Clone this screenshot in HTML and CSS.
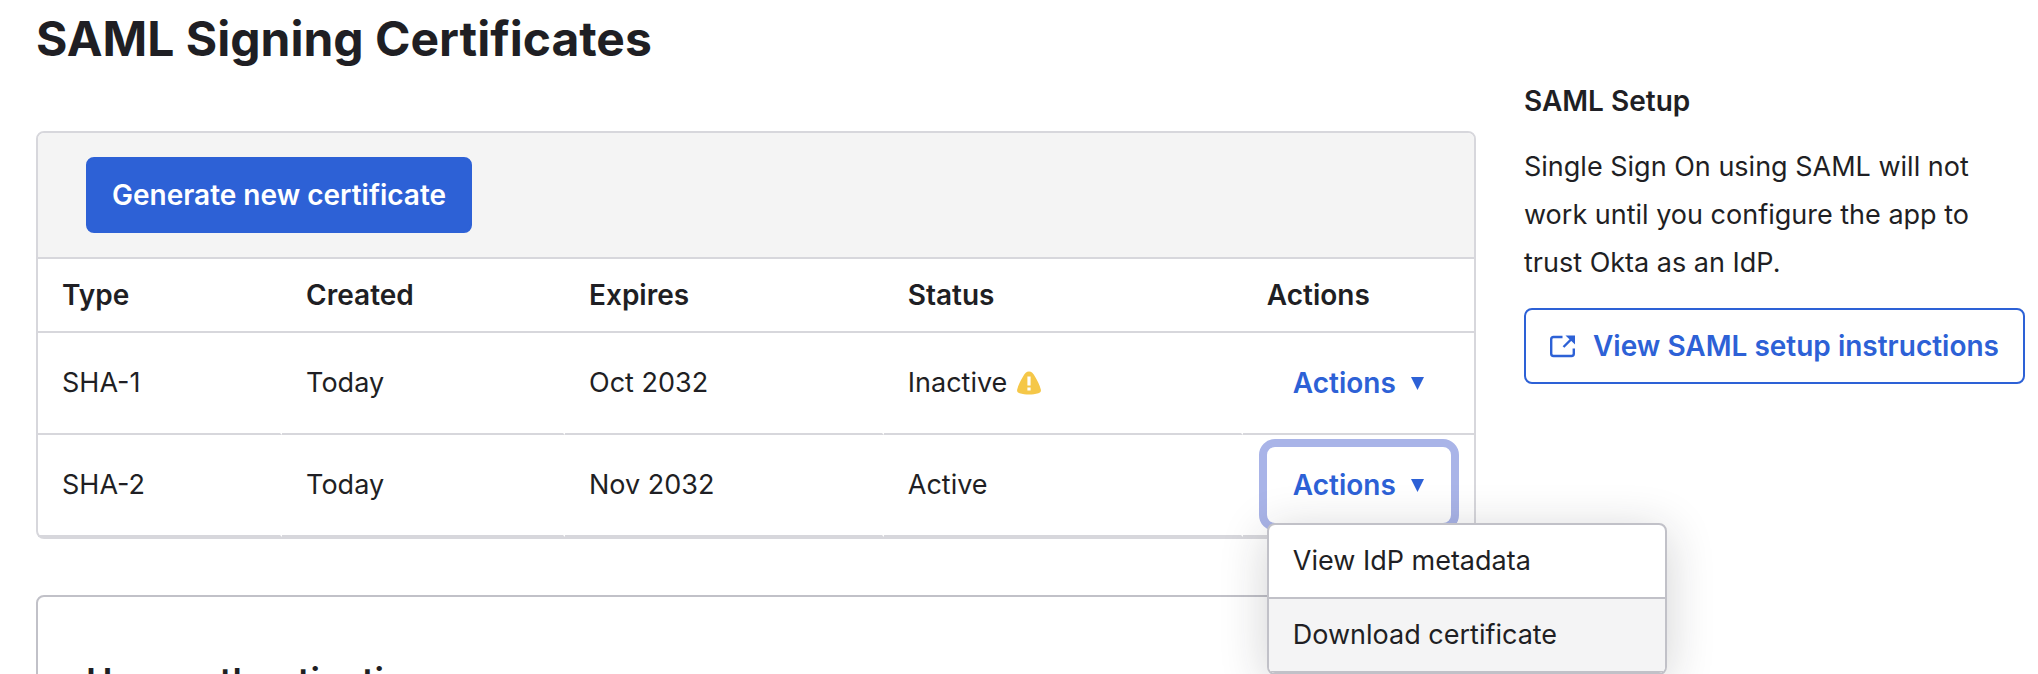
FILE: index.html
```html
<!DOCTYPE html>
<html lang="en">
<head>
<meta charset="utf-8">
<title>SAML Signing Certificates</title>
<link rel="stylesheet" href="styles.css">
</head>
<body>
<div class="page">
  <main class="main">
    <h1 class="title">SAML Signing Certificates</h1>
    <section class="card">
      <div class="toolbar">
        <button class="btn btn-primary" type="button">Generate new certificate</button>
      </div>
      <table class="certs">
        <colgroup>
          <col class="col-type"><col class="col-created"><col class="col-expires"><col class="col-status"><col>
        </colgroup>
        <thead>
          <tr><th scope="col">Type</th><th scope="col">Created</th><th scope="col">Expires</th><th scope="col">Status</th><th scope="col">Actions</th></tr>
        </thead>
        <tbody>
          <tr>
            <td>SHA-1</td><td>Today</td><td>Oct 2032</td>
            <td>
              <span class="status">Inactive
                <svg class="warn" viewBox="0 0 24 24" role="img" aria-label="Warning">
                  <path fill="#f5c748" d="M12 0.5C9.4 0.5 7.8 2.6 6.2 5.2C3.6 9.4 1.4 13.6 0.2 18.6C-0.3 20.6 0.7 21.8 2.6 22.3C8.4 23.9 15.6 23.9 21.4 22.3C23.3 21.8 24.3 20.6 23.8 18.6C22.6 13.6 20.4 9.4 17.8 5.2C16.2 2.6 14.6 0.5 12 0.5Z"/>
                  <path fill="#fff" d="M10.4 5.5h3.2v9h-3.2zM10.4 16.5h3.2v3h-3.2z"/>
                </svg>
              </span>
            </td>
            <td class="cell-actions">
              <button class="btn btn-menu" type="button">Actions
                <svg class="caret" viewBox="0 0 13 13" aria-hidden="true"><path fill="currentColor" d="M0 0h13L6.5 13z"/></svg>
              </button>
            </td>
          </tr>
          <tr>
            <td>SHA-2</td><td>Today</td><td>Nov 2032</td><td>Active</td>
            <td class="cell-actions">
              <div class="dropdown">
                <button class="btn btn-menu is-open" type="button" aria-expanded="true">Actions
                  <svg class="caret" viewBox="0 0 13 13" aria-hidden="true"><path fill="currentColor" d="M0 0h13L6.5 13z"/></svg>
                </button>
                <ul class="menu">
                  <li><a class="menu-item" href="#metadata">View IdP metadata</a></li>
                  <li><a class="menu-item is-hover" href="#download">Download certificate</a></li>
                </ul>
              </div>
            </td>
          </tr>
        </tbody>
      </table>
    </section>
    <section class="panel">
      <h2 class="panel-title">User authentication</h2>
    </section>
  </main>
  <aside class="side">
    <h2 class="side-title">SAML Setup</h2>
    <p class="side-text">Single Sign On using SAML will not work until you configure the app to trust Okta as an IdP.</p>
    <a class="btn btn-outline" href="#setup">
      <svg class="external" viewBox="0 0 25 23" aria-hidden="true">
        <path fill="none" stroke="currentColor" stroke-width="2.4" d="M12.5 2H3.5Q1.2 2 1.2 4.2V18.8Q1.2 21 3.5 21H21.5Q23.8 21 23.8 18.8V13.5"/>
        <path fill="none" stroke="currentColor" stroke-width="2.4" d="M13.5 12L21 4.5"/>
        <path fill="currentColor" d="M15.5 0.5H25V9.5z"/>
      </svg>
      View SAML setup instructions
    </a>
  </aside>
</div>
</body>
</html>
```
FILE: styles.css
```css
* {
  box-sizing: border-box;
}

html {
  overflow: hidden;
}

body {
  margin: 0;
  height: 100vh;
  overflow: hidden;
  background: #fff;
  color: #1f1f24;
  font-family: Inter, sans-serif;
  font-size: 27px;
  line-height: 48px;
}

.page {
  display: flex;
  gap: 48px;
  padding: 0 13px 0 36px;
}

.main {
  flex: 1;
  min-width: 0;
}

.title {
  margin: 0 0 56px;
  padding-top: 3px;
  font-size: 48px;
  font-weight: 700;
  line-height: 72px;
}

.card {
  border: 2px solid #d7d7dc;
  border-radius: 8px;
}

.toolbar {
  display: flex;
  padding: 24px 48px;
  border-bottom: 2px solid #d7d7dc;
  border-radius: 6px 6px 0 0;
  background: #f4f4f4;
}

.btn {
  display: inline-flex;
  align-items: center;
  height: 76px;
  padding: 0 24px;
  border: 2px solid transparent;
  border-radius: 8px;
  background: none;
  color: #2d61d6;
  font: inherit;
  font-size: 28px;
  font-weight: 600;
  text-decoration: none;
  white-space: nowrap;
}

.btn-primary {
  background: #2d61d6;
  border-color: #2d61d6;
  color: #fff;
}

.btn-outline {
  gap: 18px;
  width: 100%;
  border-color: #2d61d6;
}

.btn-menu {
  gap: 15px;
  width: 184px;
}

.btn-menu.is-open {
  outline: 8px solid #a9b4e8;
  background: #fff;
}

.caret {
  width: 13px;
  height: 13px;
}

.certs {
  width: 100%;
  table-layout: fixed;
  border-collapse: separate;
  border-spacing: 0;
}

.col-type { width: 17%; }
.col-created { width: 19.7%; }
.col-expires { width: 22.2%; }
.col-status { width: 25%; }

.certs th,
.certs td {
  height: 102px;
  padding: 0 0 0 24px;
  border-bottom: 2px solid #d7d7dc;
  text-align: left;
  vertical-align: middle;
}

.certs th {
  height: 74px;
  font-size: 28px;
  font-weight: 600;
}

.certs td:not(:last-child) {
  border-right: 2px solid transparent;
}

.certs .cell-actions {
  line-height: 0;
}

.cell-actions .btn {
  line-height: 48px;
}

.status {
  display: flex;
  align-items: center;
  gap: 10px;
}

.warn {
  width: 24px;
  height: 24px;
}

.dropdown {
  position: relative;
  width: 184px;
}

.menu {
  position: absolute;
  z-index: 2;
  top: 100%;
  left: 0;
  width: 400px;
  margin: 0;
  padding: 0;
  border: 2px solid #c1c1c8;
  border-radius: 8px;
  background: #fff;
  box-shadow: 0 8px 48px rgba(29, 29, 33, 0.2);
  line-height: 48px;
  list-style: none;
  overflow: hidden;
}

.menu-item {
  display: block;
  padding: 12px 24px;
  border-bottom: 2px solid #c1c1c8;
  color: #1f1f24;
  text-decoration: none;
}

.menu-item.is-hover {
  background: #f4f4f5;
}

.panel {
  margin-top: 56px;
  padding: 64px 48px;
  border: 2px solid #c1c1c8;
  border-radius: 8px;
}

.panel-title {
  margin: 0;
  font-size: 36px;
  font-weight: 600;
  line-height: 40px;
}

.side {
  width: 501px;
  padding-top: 77px;
}

.side-title {
  margin: 0 0 18px;
  font-size: 28px;
  font-weight: 600;
}

.side-text {
  margin: 0 0 21px;
}

.external {
  flex: none;
  width: 25px;
  height: 23px;
}
```
